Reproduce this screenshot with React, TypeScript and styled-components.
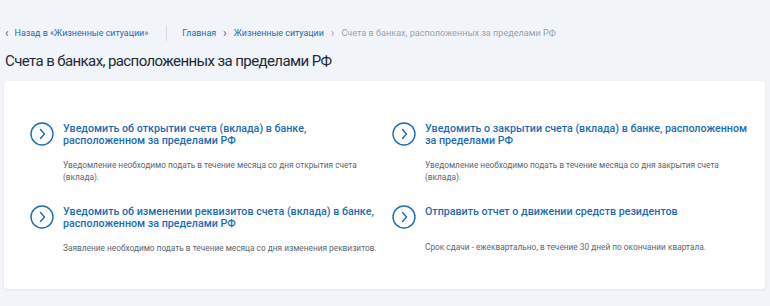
import styled, { createGlobalStyle } from "styled-components";

const GlobalStyle = createGlobalStyle`
  body {
    margin: 0;
    background: #f1f4f9;
    font-family: Roboto, "Open Sans", sans-serif;
  }
`;

const Page = styled.div`
  width: 770px;
  height: 306px;
  padding: 0 5px 0 4px;
  box-sizing: border-box;
  overflow: hidden;
`;

const Crumbs = styled.nav`
  display: flex;
  align-items: center;
  height: 16px;
  margin-top: 25px;
  padding-left: 1px;
  font-size: 8.9px;
`;

const CrumbLink = styled.a`
  color: #1d6bb5;
  text-decoration: none;
  display: flex;
  align-items: center;
`;

const Divider = styled.span`
  width: 1px;
  height: 16px;
  background: #d5dbe3;
  margin: 0 15px 0 18px;
`;

const Chevron = styled.span<{ $muted?: boolean; $lead?: boolean }>`
  color: ${({ $muted }) => ($muted ? "#9aa3ad" : "#1d6bb5")};
  margin: ${({ $lead }) => ($lead ? "0 6px 0 0" : "0 7px")};
  font-size: 12px;
  line-height: 1;
`;

const Current = styled.span`
  color: #9aa3ad;
  font-size: 9.1px;
`;

const Title = styled.h1`
  margin: 10px 0 0 1px;
  font-size: 15px;
  line-height: 20px;
  letter-spacing: -0.6px;
  font-weight: 400;
  color: #1f2a37;
`;

const Card = styled.section`
  margin-top: 10px;
  background: #fff;
  border-radius: 4px;
  box-shadow: 0 1px 3px rgba(40, 60, 90, 0.08);
  height: 208px;
  box-sizing: border-box;
  padding: 42px 10px 0 26px;
  display: grid;
  grid-template-columns: 353px 1fr;
  grid-template-rows: 83px 1fr;
  column-gap: 9px;
`;

const Item = styled.div`
  display: grid;
  grid-template-columns: 33px 1fr;
  align-content: start;
`;

const Circle = styled.span`
  width: 24px;
  height: 24px;
  margin-top: -1px;
  display: flex;
  align-items: center;
  justify-content: center;
`;

const ItemTitle = styled.a`
  color: #1d6bb5;
  font-weight: 500;
  font-size: 10.7px;
  line-height: 12px;
  text-decoration: none;
`;

const Desc = styled.p`
  grid-column: 2;
  margin: 12px 0 0;
  font-size: 8.3px;
  line-height: 12px;
  color: #5c6670;
`;

const Arrow = () => (
  <Circle>
    <svg width="24" height="24" viewBox="0 0 24 24" fill="none">
      <circle cx="12" cy="12" r="11" stroke="#1d6bb5" strokeWidth="1.4" />
      <path d="M10.5 7.5 L14.5 12 L10.5 16.5" stroke="#1d6bb5" strokeWidth="1.4" strokeLinecap="round" strokeLinejoin="round" />
    </svg>
  </Circle>
);

const items = [
  {
    title: "Уведомить об открытии счета (вклада) в банке, расположенном за пределами РФ",
    desc: "Уведомление необходимо подать в течение месяца со дня открытия счета (вклада).",
  },
  {
    title: "Уведомить о закрытии счета (вклада) в банке, расположенном за пределами РФ",
    desc: "Уведомление необходимо подать в течение месяца со дня закрытия счета (вклада).",
  },
  {
    title: "Уведомить об изменении реквизитов счета (вклада) в банке, расположенном за пределами РФ",
    desc: "Заявление необходимо подать в течение месяца со дня изменения реквизитов.",
  },
  {
    title: "Отправить отчет о движении средств резидентов",
    desc: "Срок сдачи - ежеквартально, в течение 30 дней по окончании квартала.",
  },
];

export default function App() {
  return (
    <Page>
      <GlobalStyle />
      <Crumbs>
        <CrumbLink href="#">
          <Chevron $lead>‹</Chevron>
          Назад в «Жизненные ситуации»
        </CrumbLink>
        <Divider />
        <CrumbLink href="#">Главная</CrumbLink>
        <Chevron>›</Chevron>
        <CrumbLink href="#">Жизненные ситуации</CrumbLink>
        <Chevron $muted>›</Chevron>
        <Current>Счета в банках, расположенных за пределами РФ</Current>
      </Crumbs>
      <Title>Счета в банках, расположенных за пределами РФ</Title>
      <Card>
        {items.map((it) => (
          <Item key={it.title}>
            <Arrow />
            <ItemTitle href="#">{it.title}</ItemTitle>
            <Desc>{it.desc}</Desc>
          </Item>
        ))}
      </Card>
    </Page>
  );
}
